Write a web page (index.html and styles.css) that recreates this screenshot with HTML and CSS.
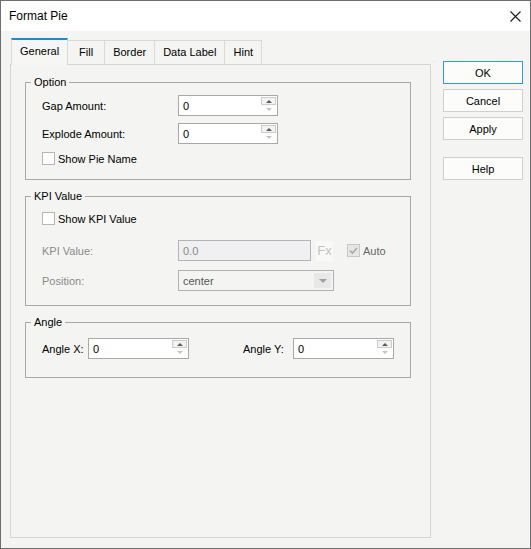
FILE: index.html
```html
<!DOCTYPE html>
<html>
<head>
<meta charset="utf-8">
<title>Format Pie</title>
<link rel="stylesheet" href="styles.css">
</head>
<body>
<div class="window">
  <div class="titlebar">
    <span class="title">Format Pie</span>
    <svg class="close" width="11" height="11" viewBox="0 0 11 11"><path d="M0.5 0.5 L10.5 10.5 M10.5 0.5 L0.5 10.5" stroke="#1a1a1a" stroke-width="1.1" fill="none"/></svg>
  </div>
  <div class="main">
    <div class="left">
      <div class="tabs">
        <div class="tab active">General</div>
        <div class="tab">Fill</div>
        <div class="tab">Border</div>
        <div class="tab">Data Label</div>
        <div class="tab">Hint</div>
      </div>
      <div class="panel">
        <fieldset class="group">
          <legend>Option</legend>
          <div class="gbody g-option">
            <div class="row">
              <span class="label lw136">Gap Amount:</span>
              <div class="num w100"><span class="v">0</span><span class="spin"><span class="up"></span><span class="dn"></span></span></div>
            </div>
            <div class="row">
              <span class="label lw136">Explode Amount:</span>
              <div class="num w100"><span class="v">0</span><span class="spin"><span class="up"></span><span class="dn"></span></span></div>
            </div>
            <div class="row check-row">
              <span class="cb"></span><span>Show Pie Name</span>
            </div>
          </div>
        </fieldset>

        <fieldset class="group">
          <legend>KPI Value</legend>
          <div class="gbody g-kpi">
            <div class="row check-row">
              <span class="cb"></span><span>Show KPI Value</span>
            </div>
            <div class="row r-kpi">
              <span class="label lw136 dim">KPI Value:</span>
              <div class="field w133 disabled"><span class="v">0.0</span></div>
              <span class="fx">Fx</span>
              <span class="cb dis"><svg width="11" height="11" viewBox="0 0 11 11"><path d="M2 5.5 L4.5 8 L9 3" stroke="#a9a9a9" stroke-width="1.6" fill="none"/></svg></span><span class="auto">Auto</span>
            </div>
            <div class="row r-pos">
              <span class="label lw136 dim">Position:</span>
              <div class="select w156"><span class="v">center</span><span class="drop"></span></div>
            </div>
          </div>
        </fieldset>

        <fieldset class="group">
          <legend>Angle</legend>
          <div class="gbody g-angle">
            <div class="row">
              <span class="label lw46">Angle X:</span>
              <div class="num w101"><span class="v">0</span><span class="spin"><span class="up"></span><span class="dn"></span></span></div>
              <span class="label lw50 gapy">Angle Y:</span>
              <div class="num w101"><span class="v">0</span><span class="spin"><span class="up"></span><span class="dn"></span></span></div>
            </div>
          </div>
        </fieldset>
      </div>
    </div>
    <div class="buttons">
      <div class="btn default">OK</div>
      <div class="btn">Cancel</div>
      <div class="btn">Apply</div>
      <div class="btn help">Help</div>
    </div>
  </div>
</div>
</body>
</html>
```

FILE: styles.css
```css
body {
  margin: 0;
  font-family: "Liberation Sans", Arial, sans-serif;
  font-size: 11px;
  color: #000;
  background: #fff;
}

.window {
  width: 531px;
  height: 549px;
  box-sizing: border-box;
  border: 1px solid #6e6e6e;
  background: #f4f5f2;
  display: flex;
  flex-direction: column;
}

.titlebar {
  height: 30px;
  flex: none;
  background: #fff;
  display: flex;
  align-items: center;
  justify-content: space-between;
  padding: 0 9px 0 8px;
}

.title {
  font-size: 12px;
  color: #000;
}

.main {
  flex: 1;
  display: flex;
  min-height: 0;
}

.left {
  display: flex;
  flex-direction: column;
  padding: 7px 0 10px 9px;
}

.tabs {
  display: flex;
  align-items: flex-end;
  margin-left: 1px;
  margin-bottom: -1px;
  position: relative;
  z-index: 1;
  height: 27px;
}

.tab {
  height: 24px;
  box-sizing: border-box;
  border: 1px solid #d9d9d9;
  border-bottom: 0;
  padding: 2px 8px 0;
  line-height: 19px;
  margin-left: -1px;
  margin-bottom: 1px;
  min-width: 38px;
  text-align: center;
  background: #f4f5f2;
}

.tab.active {
  height: 27px;
  margin-left: 0;
  margin-bottom: 0;
  border-top: 2px solid #1c8bd6;
  padding: 2px 8px 0;
  background: #f6f7f5;
  position: relative;
  z-index: 2;
}

.panel {
  flex: 1;
  width: 421px;
  box-sizing: border-box;
  border: 1px solid #d5d5d5;
  padding: 11px 19px 0 14px;
}

.group {
  margin: 0;
  padding: 0;
  border: 1px solid #a8a8a8;
  min-width: 0;
}

.group + .group {
  margin-top: 10px;
}

legend {
  margin-left: 5px;
  padding: 0 3px;
  line-height: 13px;
  font-size: 11px;
}

.gbody {
  padding-left: 16px;
}

.g-option {
  padding-top: 6px;
  padding-bottom: 13px;
}

.g-kpi {
  padding-top: 8px;
  padding-bottom: 14px;
}

.g-angle {
  padding-top: 9px;
  padding-bottom: 18px;
}

.row {
  display: flex;
  align-items: center;
}

.row + .row {
  margin-top: 7px;
}

.check-row {
  height: 15px;
}

.g-option .check-row {
  margin-top: 7px;
}

.g-kpi .r-kpi {
  margin-top: 14px;
}

.g-kpi .r-pos {
  margin-top: 9px;
}

.label {
  flex: none;
}

.lw136 { width: 136px; }
.lw46 { width: 46px; }
.lw50 { width: 50px; }
.gapy { margin-left: 54px; }

.dim {
  color: #8a8a8a;
}

.w100 { width: 100px; }
.w101 { width: 101px; }
.w133 { width: 133px; }
.w156 { width: 156px; }

.num,
.field,
.select {
  flex: none;
  height: 21px;
  box-sizing: border-box;
  border: 1px solid #a9a9a9;
  background: #fff;
  display: flex;
  align-items: center;
}

.num .v,
.field .v,
.select .v {
  flex: 1;
  padding-left: 4px;
}

.field.disabled {
  background: #f0eff1;
  border-color: #b4b4b4;
  color: #8a8a8a;
}

.spin {
  align-self: stretch;
  width: 15px;
  padding: 1px 1px 1px 0;
  display: flex;
  flex-direction: column;
}

.up {
  height: 8px;
  box-sizing: border-box;
  border: 1px solid #cccccc;
  background: #f3f3f3;
  display: flex;
  align-items: center;
  justify-content: center;
}

.up::after {
  content: "";
  border-left: 3px solid transparent;
  border-right: 3px solid transparent;
  border-bottom: 3px solid #5a5a5a;
}

.dn {
  flex: 1;
  display: flex;
  align-items: center;
  justify-content: center;
}

.dn::after {
  content: "";
  border-left: 3px solid transparent;
  border-right: 3px solid transparent;
  border-top: 3px solid #c4c4c4;
}

.cb {
  flex: none;
  width: 13px;
  height: 13px;
  box-sizing: border-box;
  border: 1px solid #b7b7b7;
  background: #fff;
  margin-right: 3px;
  display: flex;
  align-items: center;
  justify-content: center;
}

.cb.dis {
  background: #e6e6e6;
  border-color: #c8c8c8;
  margin-left: 14px;
}

.fx {
  flex: none;
  width: 17px;
  height: 20px;
  margin-left: 5px;
  background: #f9faf8;
  color: #c2c2c2;
  font-size: 13px;
  line-height: 20px;
  text-align: center;
}

.auto {
  color: #666;
}

.select {
  border-color: #b1b1b1;
  background: #f4f5f2;
  color: #555;
}

.drop {
  width: 17px;
  height: 15px;
  margin-right: 2px;
  background: #e8e8e8;
  display: flex;
  align-items: center;
  justify-content: center;
}

.drop::after {
  content: "";
  border-left: 4px solid transparent;
  border-right: 4px solid transparent;
  border-top: 4px solid #a0a0a0;
}

.buttons {
  margin-left: 12px;
  padding-top: 30px;
  display: flex;
  flex-direction: column;
  gap: 5px;
}

.btn {
  width: 80px;
  height: 23px;
  box-sizing: border-box;
  border: 1px solid #d0d0d0;
  background: #fcfdfb;
  display: flex;
  align-items: center;
  justify-content: center;
}

.btn.default {
  border-color: #2a9be2;
}

.btn.help {
  margin-top: 12px;
}
```
